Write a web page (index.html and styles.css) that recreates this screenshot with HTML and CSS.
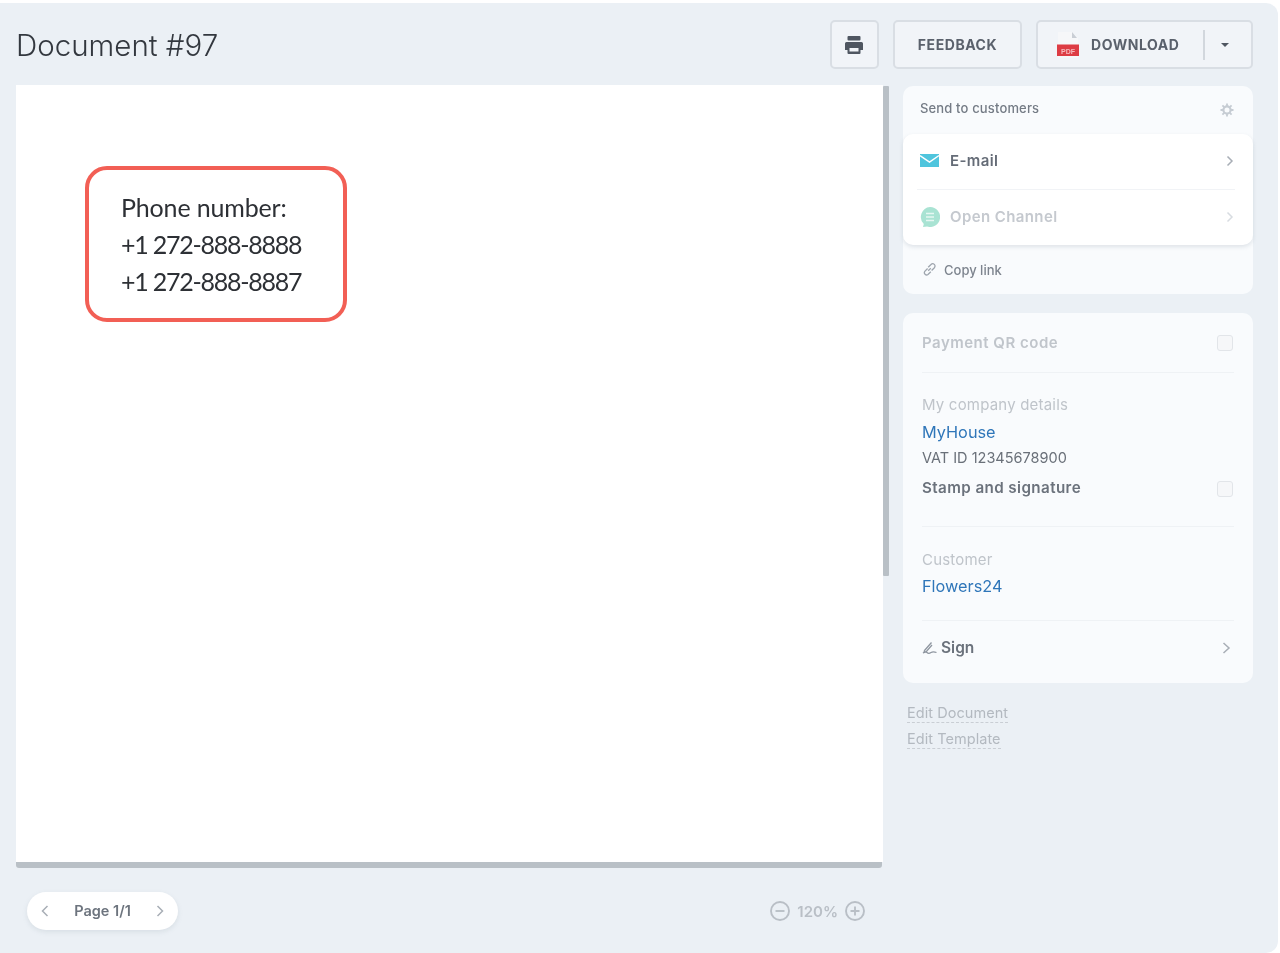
FILE: index.html
```html
<!DOCTYPE html>
<html lang="en">
<head>
<meta charset="utf-8">
<title>Document #97</title>
<link rel="stylesheet" href="styles.css">
</head>
<body>
<div class="app">
  <header class="topbar">
    <h1 class="title">Document #97</h1>
    <div class="actions">
      <button class="btn btn-print" aria-label="Print">
        <svg width="20" height="20" viewBox="0 0 20 20"><rect x="3.500" y="1" width="13" height="4.500" rx="1" fill="#4f5661"/><path fill="#4f5661" d="M2.500 7h15a1.500 1.500 0 0 1 1.500 1.500V15h-3v-3H4v3H1V8.500A1.500 1.500 0 0 1 2.500 7z"/><path fill="#4f5661" d="M3.500 11.500h13V18a1 1 0 0 1-1 1h-11a1 1 0 0 1-1-1z"/><rect x="5.500" y="13" width="9" height="3.500" fill="#f1f4f8"/></svg>
      </button>
      <button class="btn btn-feedback">FEEDBACK</button>
      <button class="btn btn-download">
        <svg class="pdf" width="26" height="28" viewBox="0 0 26 28"><path fill="#f6f7f9" d="M3 1h14l6 6v20H3z"/><path fill="#c9ced5" d="M17 1l5 6h-5z"/><rect x="2" y="13.500" width="22" height="11.500" fill="#dd3c44"/><text x="13" y="22.500" class="pdf-text" text-anchor="middle">PDF</text></svg>
        <span class="dl-label">DOWNLOAD</span>
        <span class="dl-sep"></span>
        <span class="caret"></span>
      </button>
    </div>
  </header>
  <div class="main">
    <section class="viewer">
      <div class="doc-row">
        <div class="doc">
          <div class="phone-box">
            <p>Phone number:</p>
            <p class="phone-num">+1 272-888-8888</p>
            <p class="phone-num">+1 272-888-8887</p>
          </div>
        </div>
        <div class="vscroll-track"><div class="vscroll"></div></div>
      </div>
      <div class="hscroll"></div>
      <div class="viewer-foot">
        <div class="pager">
          <svg width="10" height="14" viewBox="0 0 10 14"><path d="M7.500 2L2.500 7l5 5" class="chev-soft"/></svg>
          <span>Page 1/1</span>
          <svg width="10" height="14" viewBox="0 0 10 14"><path d="M2.500 2l5 5-5 5" class="chev-soft"/></svg>
        </div>
        <div class="zoomer">
          <svg width="20" height="20" viewBox="0 0 20 20"><circle cx="10" cy="10" r="9" class="zoom-ic"/><path d="M5.500 10h9" class="zoom-ic"/></svg>
          <span>120%</span>
          <svg width="20" height="20" viewBox="0 0 20 20"><circle cx="10" cy="10" r="9" class="zoom-ic"/><path d="M5.500 10h9M10 5.500v9" class="zoom-ic"/></svg>
        </div>
      </div>
    </section>
    <aside class="side">
      <div class="card send">
        <div class="send-head">
          <span>Send to customers</span>
          <svg width="14" height="14" viewBox="0 0 14 14"><circle cx="7" cy="7" r="3.600" fill="none" stroke="#c6ccd3" stroke-width="2.200"/><path d="M7 .5v2.500M7 11v2.500M.5 7H3M11 7h2.500M2.400 2.400l1.800 1.800M9.800 9.800l1.800 1.800M2.400 11.600l1.800-1.800M9.800 4.200l1.800-1.800" stroke="#c6ccd3" stroke-width="1.800"/></svg>
        </div>
        <div class="channels">
          <div class="channel">
            <svg width="20" height="15" viewBox="0 0 20 15"><rect y="1" width="19" height="13" fill="#4fc5dd"/><path d="M0 2.500l9.500 6.500 9.500-6.500" fill="none" stroke="#fff" stroke-width="1.500"/></svg>
            <span class="ch-label">E-mail</span>
            <svg class="ch-chev" width="8" height="12" viewBox="0 0 8 12"><path d="M1.500 1.500L6 6l-4.500 4.500" class="chev-soft"/></svg>
          </div>
          <div class="channel channel-off">
            <svg width="20" height="20" viewBox="0 0 20 20"><path d="M10 0a10 10 0 1 1-3 19.500L3 20l.8-3A10 10 0 0 1 10 0z" fill="#a9e3d3"/><path d="M6 6.500h8M6 10h8M6 13.500h8" stroke="#e6f7f2" stroke-width="1.500"/></svg>
            <span class="ch-label">Open Channel</span>
            <svg class="ch-chev" width="8" height="12" viewBox="0 0 8 12"><path d="M1.500 1.500L6 6l-4.500 4.500" class="chev-faint"/></svg>
          </div>
        </div>
        <div class="copy">
          <svg width="15" height="15" viewBox="0 0 15 15"><path d="M6.200 8.800l2.600-2.600M5.600 6.500L2.800 9.300a2.300 2.300 0 0 0 3.200 3.200l2.800-2.800M6.200 5.300l2.800-2.800a2.300 2.300 0 0 1 3.400 3.200L9.600 8.500" fill="none" stroke="#9ea5ae" stroke-width="1.300"/></svg>
          <span>Copy link</span>
        </div>
      </div>
      <div class="card details">
        <div class="row row-qr">
          <span class="muted-strong">Payment QR code</span>
          <span class="check"></span>
        </div>
        <div class="block block-company">
          <div class="muted">My company details</div>
          <a class="link">MyHouse</a>
          <div class="vat">VAT ID 12345678900</div>
          <div class="row stamp">
            <span class="strong">Stamp and signature</span>
            <span class="check"></span>
          </div>
        </div>
        <div class="block block-customer">
          <div class="muted">Customer</div>
          <a class="link link-customer">Flowers24</a>
        </div>
        <div class="row sign">
          <span class="sign-left">
            <svg width="16" height="16" viewBox="0 0 16 16"><path d="M2.500 11.500L9.500 3.500M1 14c2-1.500 3-1.500 4-.5s2.500 1 4 0 3-1 5.500 0M2.500 11.500l-.5 2 2-.5 6-7" fill="none" stroke="#8f96a0" stroke-width="1.300"/></svg>
            <span class="sign-label">Sign</span>
          </span>
          <svg class="sign-chev" width="9" height="14" viewBox="0 0 9 14"><path d="M1.500 2L7 7l-5.500 5" class="chev-soft"/></svg>
        </div>
      </div>
      <div class="edits">
        <a class="edit">Edit Document</a>
        <a class="edit">Edit Template</a>
      </div>
    </aside>
  </div>
</div>
</body>
</html>
```
FILE: styles.css
```css
* { box-sizing: border-box; }
html, body { margin: 0; padding: 0; background: #fff; }
body { font-family: Inter, "Liberation Sans", sans-serif; width: 1280px; height: 953px; overflow: hidden; padding-top: 3px; }
p { margin: 0; }
.app {
  width: 1278px; height: 950px; background: #ebf0f5;
  border-radius: 0 12px 12px 0;
  filter: blur(0.55px);
}
.topbar { height: 82px; display: flex; align-items: flex-start; justify-content: space-between; padding: 17px 25px 0 16px; }
.title { margin: 4px 0 0; font-size: 29.500px; line-height: 42px; font-weight: 300; color: #33383f; letter-spacing: 0; }
.actions { display: flex; gap: 14px; }
.btn {
  height: 49px; padding: 0; background: #f1f4f8; border: 2px solid #d9dee4; border-radius: 5px;
  font: 700 14px Inter, "Liberation Sans", sans-serif; letter-spacing: .55px; color: #5a616c;
  display: flex; align-items: center; justify-content: center;
}
.btn-print { width: 49px; padding-right: 2px; }
.btn-feedback { width: 129px; }
.btn-download { width: 217px; justify-content: flex-start; padding-left: 17px; }
.pdf { flex: none; margin-right: 10px; }
.pdf-text { font: 600 7px "Liberation Sans", sans-serif; fill: #f6b9bc; letter-spacing: 0; }
.dl-sep { width: 2px; height: 30px; background: #d2d7dd; margin-left: 24px; }
.caret { width: 0; height: 0; border-left: 4.500px solid transparent; border-right: 4.500px solid transparent; border-top: 4.500px solid #4f5661; margin-left: 16px; }
.main { display: flex; padding: 0 25px 0 16px; gap: 14px; }
.viewer { width: 873px; }
.doc-row { display: flex; height: 777px; }
.doc { width: 867px; background: #fff; padding: 81px 0 0 69px; }
.vscroll-track { width: 6px; }
.vscroll { height: 490px; margin-top: 1px; background: #b9c0c6; border-radius: 1px; }
.hscroll { width: 866px; height: 6px; background: #b9c0c6; border-radius: 0 0 3px 3px; }
.phone-box {
  width: 262px; height: 156px; border: 4px solid #f25f55; border-radius: 22px; background: #fff;
  padding: 19px 0 0 32px; font-family: Lato, "Liberation Sans", sans-serif; font-size: 25px; line-height: 37px; color: #2d3035;
  display: flex; flex-direction: column; white-space: nowrap; letter-spacing: -.15px;
}
.phone-num { letter-spacing: -1.250px; }
.viewer-foot { display: flex; justify-content: space-between; align-items: center; padding: 24px 24px 0 11px; }
.pager {
  width: 151px; height: 38px; border-radius: 19px; background: #fff; box-shadow: 0 2px 5px rgba(120,135,150,.16);
  display: flex; align-items: center; justify-content: space-between; padding: 0 13px 1px 13px;
  font-size: 14.500px; font-weight: 600; color: #6d747e;
}
.chev-soft { fill: none; stroke: #a8aeb6; stroke-width: 1.500; }
.chev-faint { fill: none; stroke: #d8dce1; stroke-width: 1.500; }
.zoomer { display: flex; align-items: center; gap: 7px; font-size: 15px; font-weight: 600; color: #b9bfc6; }
.zoom-ic { fill: none; stroke: #b9bfc6; stroke-width: 1.900; }
.side { width: 350px; font-size: 14.500px; padding-top: 1px; }
.card { background: #f9fbfd; border-radius: 10px; }
.send { height: 208px; display: flex; flex-direction: column; }
.send-head { height: 48px; display: flex; justify-content: space-between; padding: 14px 19px 0 17px; font-size: 13px; line-height: 16px; letter-spacing: .15px; color: #747b85; font-weight: 500; }
.send-head svg { margin-top: 3px; }
.channels { height: 111px; background: #fff; border-radius: 10px; box-shadow: 0 2px 4px rgba(120,135,150,.2); padding: 0 18px 0 14px; }
.channel { height: 56px; display: flex; align-items: center; border-bottom: 1px solid #f1f3f6; padding: 0 1px 2px 3px; }
.channel-off { height: 55px; border-bottom: 0; }
.channel-off .ch-label { color: #c5c9cf; }
.ch-label { flex: 1; margin-left: 10px; font-size: 15px; font-weight: 600; color: #656c77; letter-spacing: .4px; }
.copy { height: 49px; display: flex; align-items: center; gap: 7px; padding: 0 0 0 19px; font-size: 13px; font-weight: 500; color: #7d848e; }
.details { height: 370px; margin-top: 19px; padding: 0 19px; }
.row { display: flex; justify-content: space-between; align-items: center; }
.row-qr { height: 60px; padding-bottom: 1px; border-bottom: 1px solid #eff2f5; }
.muted-strong { font-size: 15px; font-weight: 600; color: #c0c5cb; letter-spacing: .5px; }
.muted { font-size: 15px; color: #bfc4ca; letter-spacing: .2px; line-height: 18px; }
.strong { font-size: 15.200px; font-weight: 600; color: #6b727c; letter-spacing: .4px; }
.link { display: block; color: #2f76b9; font-size: 16.300px; line-height: 22px; margin-top: 7px; }
.link-customer { margin-top: 6px; }
.vat { color: #6a7079; line-height: 18px; margin-top: 6px; }
.check { width: 16px; height: 16px; margin: 2px 1px 0 0; border: 1.500px solid #e2e5e9; border-radius: 3px; background: #f6f7f9; }
.block-company { height: 154px; padding-top: 23px; border-bottom: 1px solid #eff2f5; }
.stamp { margin-top: 12px; line-height: 18px; }
.block-customer { height: 94px; padding-top: 24px; border-bottom: 1px solid #eff2f5; }
.sign { height: 54px; padding: 0 3px 2px 0; }
.sign-chev { margin-top: 2px; }
.sign-left { display: flex; align-items: center; gap: 3px; }
.sign-label { font-size: 15.500px; font-weight: 600; color: #6b727c; }
.edits { padding: 21px 0 0 4px; display: flex; flex-direction: column; align-items: flex-start; gap: 7px; }
.edit { color: #b3b9c0; line-height: 18px; border-bottom: 1px dashed #c9ced4; letter-spacing: .05px; }
```
